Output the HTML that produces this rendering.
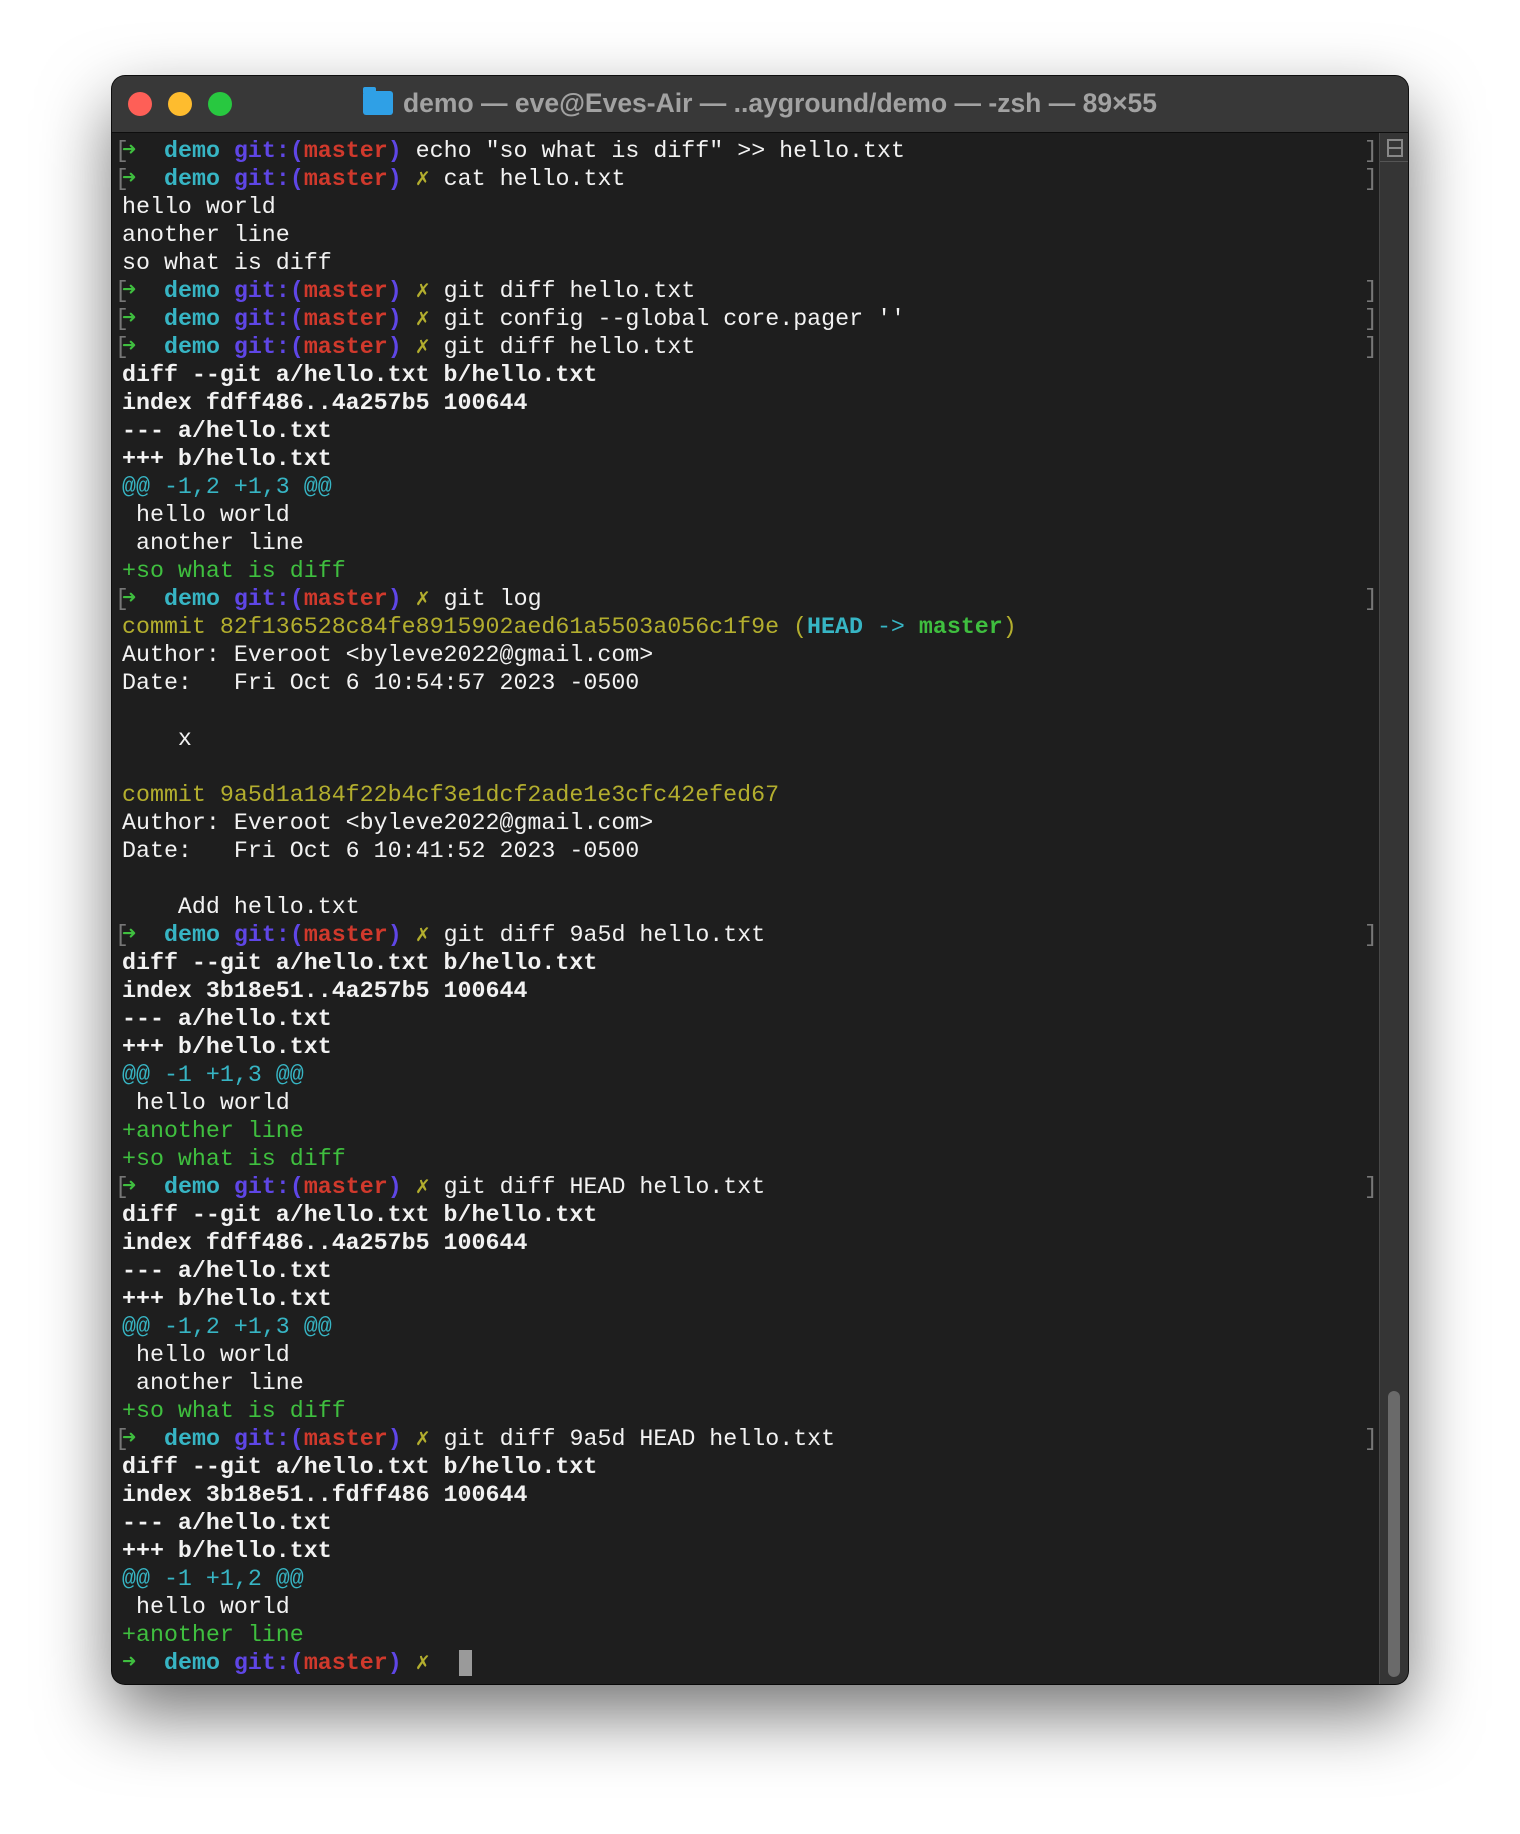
<!DOCTYPE html>
<html><head><meta charset="utf-8"><style>
html,body{margin:0;padding:0;background:#fff;width:1520px;height:1834px;overflow:hidden;}
.win{position:absolute;left:112px;top:76px;width:1296px;height:1608px;border-radius:13px;background:#1e1e1e;box-shadow:0 30px 70px rgba(0,0,0,.55),0 0 0 1px #111;overflow:hidden;}
.tb{position:absolute;left:0;top:0;right:0;height:56px;background:#383838;border-bottom:1px solid #0e0e0e;}
.dot{position:absolute;top:16px;width:24px;height:24px;border-radius:50%;}
.title{position:absolute;left:0;right:0;top:12px;text-align:center;font:bold 26.5px "Liberation Sans",sans-serif;color:#a2a2a2;}
.fold{display:inline-block;width:30px;height:24px;background:#2fa0e6;border-radius:3px;vertical-align:-3px;margin-right:10px;position:relative;}
.fold:before{content:"";position:absolute;left:0;top:-4px;width:13px;height:6px;background:#2fa0e6;border-radius:2px 2px 0 0;}
.sb{position:absolute;left:1267px;top:57px;width:29px;bottom:0;background:#353535;border-left:1px solid #474747;}
.thumb{position:absolute;left:8px;width:12px;top:1258px;height:286px;background:#6a6a6a;border-radius:6px;}
pre{position:absolute;left:10px;top:61px;margin:0;font:23.3px/28px "Liberation Mono",monospace;color:#f2f2f2;}
.g{color:#3fbf3f;font-weight:bold}.c{color:#37b5c4;font-weight:bold}.p{color:#5f46e6;font-weight:bold}.r{color:#d0392c;font-weight:bold}.y{color:#b3ae2e;font-weight:bold}
.b{font-weight:bold}.cy{color:#37b5c4}.gr{color:#3fbf3f}.ye{color:#b3ae2e}
.lb{position:absolute;left:3px;color:#777;font:23px/28px "Liberation Mono",monospace;}
.rb{position:absolute;left:1252px;color:#777;font:23px/28px "Liberation Mono",monospace;}
.cur{position:absolute;left:347px;top:1574px;width:13px;height:26px;background:#9a9a9a;}
</style></head><body>
<div class="win">
<div class="tb">
<div class="dot" style="left:16px;background:#fe5f57"></div>
<div class="dot" style="left:56px;background:#febc2e"></div>
<div class="dot" style="left:96px;background:#28c840"></div>
<div class="title"><span class="fold"></span>demo — eve@Eves-Air — ..ayground/demo — -zsh — 89×55</div>
</div>
<div class="sb"><div style="position:absolute;left:0;top:0;width:29px;height:28px;border-bottom:1px solid #555"><div style="position:absolute;left:7px;top:6px;width:12px;height:14px;border:2px solid #888"><div style="position:absolute;left:0;right:0;top:6px;height:2px;background:#888"></div></div></div><div class="thumb"></div></div>
<div class="lb" style="top:61px">[</div><div class="rb" style="top:61px">]</div>
<div class="lb" style="top:89px">[</div><div class="rb" style="top:89px">]</div>
<div class="lb" style="top:201px">[</div><div class="rb" style="top:201px">]</div>
<div class="lb" style="top:229px">[</div><div class="rb" style="top:229px">]</div>
<div class="lb" style="top:257px">[</div><div class="rb" style="top:257px">]</div>
<div class="lb" style="top:509px">[</div><div class="rb" style="top:509px">]</div>
<div class="lb" style="top:845px">[</div><div class="rb" style="top:845px">]</div>
<div class="lb" style="top:1097px">[</div><div class="rb" style="top:1097px">]</div>
<div class="lb" style="top:1349px">[</div><div class="rb" style="top:1349px">]</div>
<pre><span class="g">➜</span>  <span class="c">demo</span> <span class="p">git:(</span><span class="r">master</span><span class="p">)</span> echo "so what is diff" &gt;&gt; hello.txt
<span class="g">➜</span>  <span class="c">demo</span> <span class="p">git:(</span><span class="r">master</span><span class="p">)</span> <span class="y">✗</span> cat hello.txt
hello world
another line
so what is diff
<span class="g">➜</span>  <span class="c">demo</span> <span class="p">git:(</span><span class="r">master</span><span class="p">)</span> <span class="y">✗</span> git diff hello.txt
<span class="g">➜</span>  <span class="c">demo</span> <span class="p">git:(</span><span class="r">master</span><span class="p">)</span> <span class="y">✗</span> git config --global core.pager ''
<span class="g">➜</span>  <span class="c">demo</span> <span class="p">git:(</span><span class="r">master</span><span class="p">)</span> <span class="y">✗</span> git diff hello.txt
<span class="b">diff --git a/hello.txt b/hello.txt
index fdff486..4a257b5 100644
--- a/hello.txt
+++ b/hello.txt</span>
<span class="cy">@@ -1,2 +1,3 @@</span>
 hello world
 another line
<span class="gr">+so what is diff</span>
<span class="g">➜</span>  <span class="c">demo</span> <span class="p">git:(</span><span class="r">master</span><span class="p">)</span> <span class="y">✗</span> git log
<span class="ye">commit 82f136528c84fe8915902aed61a5503a056c1f9e (</span><span class="c">HEAD</span><span class="cy"> -&gt; </span><span class="g">master</span><span class="ye">)</span>
Author: Everoot &lt;byleve2022@gmail.com&gt;
Date:   Fri Oct 6 10:54:57 2023 -0500

    x

<span class="ye">commit 9a5d1a184f22b4cf3e1dcf2ade1e3cfc42efed67</span>
Author: Everoot &lt;byleve2022@gmail.com&gt;
Date:   Fri Oct 6 10:41:52 2023 -0500

    Add hello.txt
<span class="g">➜</span>  <span class="c">demo</span> <span class="p">git:(</span><span class="r">master</span><span class="p">)</span> <span class="y">✗</span> git diff 9a5d hello.txt
<span class="b">diff --git a/hello.txt b/hello.txt
index 3b18e51..4a257b5 100644
--- a/hello.txt
+++ b/hello.txt</span>
<span class="cy">@@ -1 +1,3 @@</span>
 hello world
<span class="gr">+another line</span>
<span class="gr">+so what is diff</span>
<span class="g">➜</span>  <span class="c">demo</span> <span class="p">git:(</span><span class="r">master</span><span class="p">)</span> <span class="y">✗</span> git diff HEAD hello.txt
<span class="b">diff --git a/hello.txt b/hello.txt
index fdff486..4a257b5 100644
--- a/hello.txt
+++ b/hello.txt</span>
<span class="cy">@@ -1,2 +1,3 @@</span>
 hello world
 another line
<span class="gr">+so what is diff</span>
<span class="g">➜</span>  <span class="c">demo</span> <span class="p">git:(</span><span class="r">master</span><span class="p">)</span> <span class="y">✗</span> git diff 9a5d HEAD hello.txt
<span class="b">diff --git a/hello.txt b/hello.txt
index 3b18e51..fdff486 100644
--- a/hello.txt
+++ b/hello.txt</span>
<span class="cy">@@ -1 +1,2 @@</span>
 hello world
<span class="gr">+another line</span>
<span class="g">➜</span>  <span class="c">demo</span> <span class="p">git:(</span><span class="r">master</span><span class="p">)</span> <span class="y">✗</span> </pre>
<div class="cur"></div>
</div>
</body></html>
